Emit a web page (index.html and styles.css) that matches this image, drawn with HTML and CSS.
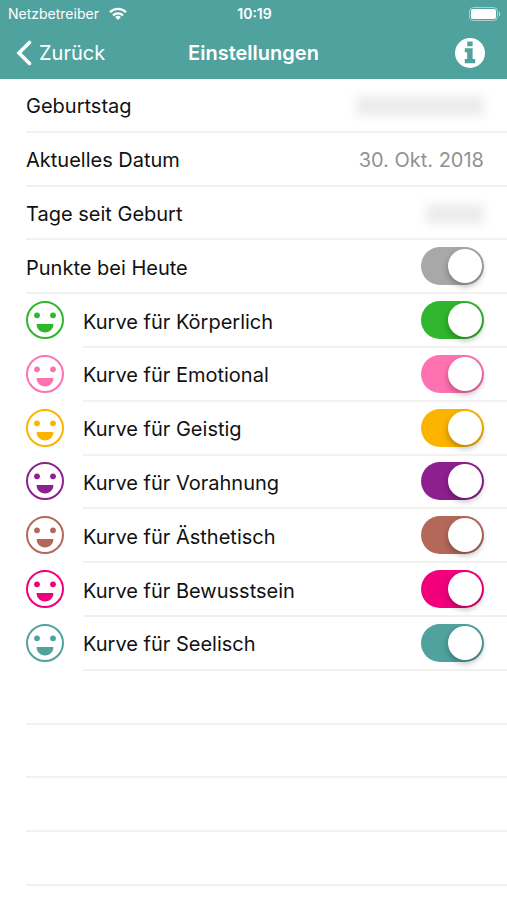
FILE: index.html
```
<!DOCTYPE html>
<html lang="de">
<head>
    <meta charset="UTF-8">
    <meta name="viewport" content="width=device-width, initial-scale=1.0">
    <title>Einstellungen</title>
    <link rel="stylesheet" href="styles.css">
</head>
<body>
    <svg width="0" height="0" class="sprite" aria-hidden="true">
        <symbol id="smiley" viewBox="1 1 38 38">
            <circle cx="20" cy="20" r="18" fill="none" stroke="currentColor" stroke-width="2"/>
            <circle cx="12" cy="15.3" r="2.9" fill="currentColor"/>
            <circle cx="28" cy="15.3" r="2.9" fill="currentColor"/>
            <path d="M11.6 24h16.8c0 5-3.4 8.4-8.4 8.4s-8.4-3.4-8.4-8.4z" fill="currentColor"/>
        </symbol>
    </svg>

    <header>
        <div class="status">
            <span class="carrier">Netzbetreiber
                <svg width="18" height="14" viewBox="0 0 18 14" fill="none" stroke="#fff" stroke-width="2.2">
                    <path d="M1 5.2a11.4 11.4 0 0 1 16 0"/>
                    <path d="M4 8.4a7.2 7.2 0 0 1 10 0"/>
                    <path d="M9 13l-2.9-2.9a4.1 4.1 0 0 1 5.8 0z" fill="#fff" stroke="none"/>
                </svg>
            </span>
            <span class="time">10:19</span>
            <svg class="battery" width="32" height="14" viewBox="0 0 32 14">
                <rect x="0.5" y="0.5" width="28" height="13" rx="4" fill="none" stroke="#fff" stroke-opacity="0.5"/>
                <rect x="2" y="2" width="25" height="10" rx="2" fill="#fff"/>
                <path d="M30 4.5c1.6.7 1.6 4.3 0 5z" fill="#fff" fill-opacity="0.6"/>
            </svg>
        </div>
        <nav>
            <a href="#" class="back">
                <svg width="16" height="26" viewBox="0 0 16 26" fill="none" stroke="#fff" stroke-width="3.6" stroke-linecap="round">
                    <path d="M13.5 2.5L3 13l10.5 10.5"/>
                </svg>
                Zurück
            </a>
            <h1>Einstellungen</h1>
            <button type="button" class="info" aria-label="Info">
                <svg width="30" height="30" viewBox="0 0 30 30">
                    <circle cx="15" cy="15" r="15" fill="#fff"/>
                    <path d="M12.2 3.6h5.4v4.6h-5.4zM9.8 10.2h7.8v10.9h2.6v4.1H9.8v-4.1h2.4v-6.8H9.8z" fill="#50a29e"/>
                </svg>
            </button>
        </nav>
    </header>

    <main>
        <div class="row">
            <div class="cell">
                <span class="text">Geburtstag</span>
                <span class="hidden-value"></span>
            </div>
        </div>
        <div class="row">
            <div class="cell">
                <span class="text">Aktuelles Datum</span>
                <span class="text value">30. Okt. 2018</span>
            </div>
        </div>
        <div class="row">
            <div class="cell">
                <span class="text">Tage seit Geburt</span>
                <span class="hidden-value short"></span>
            </div>
        </div>
        <div class="row gray">
            <div class="cell">
                <label class="text" for="heute">Punkte bei Heute</label>
                <input type="checkbox" id="heute" checked>
            </div>
        </div>
        <div class="row green">
            <svg class="smiley"><use href="#smiley"/></svg>
            <div class="cell">
                <label class="text" for="koerperlich">Kurve für Körperlich</label>
                <input type="checkbox" id="koerperlich" checked>
            </div>
        </div>
        <div class="row pink">
            <svg class="smiley"><use href="#smiley"/></svg>
            <div class="cell">
                <label class="text" for="emotional">Kurve für Emotional</label>
                <input type="checkbox" id="emotional" checked>
            </div>
        </div>
        <div class="row yellow">
            <svg class="smiley"><use href="#smiley"/></svg>
            <div class="cell">
                <label class="text" for="geistig">Kurve für Geistig</label>
                <input type="checkbox" id="geistig" checked>
            </div>
        </div>
        <div class="row purple">
            <svg class="smiley"><use href="#smiley"/></svg>
            <div class="cell">
                <label class="text" for="vorahnung">Kurve für Vorahnung</label>
                <input type="checkbox" id="vorahnung" checked>
            </div>
        </div>
        <div class="row brown">
            <svg class="smiley"><use href="#smiley"/></svg>
            <div class="cell">
                <label class="text" for="aesthetisch">Kurve für Ästhetisch</label>
                <input type="checkbox" id="aesthetisch" checked>
            </div>
        </div>
        <div class="row magenta">
            <svg class="smiley"><use href="#smiley"/></svg>
            <div class="cell">
                <label class="text" for="bewusstsein">Kurve für Bewusstsein</label>
                <input type="checkbox" id="bewusstsein" checked>
            </div>
        </div>
        <div class="row teal">
            <svg class="smiley"><use href="#smiley"/></svg>
            <div class="cell">
                <label class="text" for="seelisch">Kurve für Seelisch</label>
                <input type="checkbox" id="seelisch" checked>
            </div>
        </div>
        <div class="row"><div class="cell"></div></div>
        <div class="row"><div class="cell"></div></div>
        <div class="row"><div class="cell"></div></div>
        <div class="row"><div class="cell"></div></div>
    </main>
</body>
</html>
```
FILE: styles.css
```
* {
    box-sizing: border-box;
}

body {
    margin: 0;
    min-height: 100vh;
    display: flex;
    flex-direction: column;
    background-color: #fff;
    font-family: Inter, "Liberation Sans", sans-serif;
    font-size: 20px;
}

.sprite {
    position: absolute;
}

/* Header */
header {
    background-color: #50a29e;
    color: #fff;
}

.status,
nav {
    display: grid;
    grid-template-columns: 1fr auto 1fr;
    align-items: center;
}

.status {
    height: 27px;
    padding: 0 6px 0 8px;
    font-size: 14px;
}

.carrier {
    display: flex;
    align-items: center;
    gap: 10px;
}

.time {
    font-weight: 600;
}

.battery {
    justify-self: end;
}

nav {
    height: 52px;
    padding: 0 16px;
}

.back {
    display: flex;
    align-items: center;
    gap: 7px;
    color: #fff;
    text-decoration: none;
}

h1 {
    margin: 0;
    font-size: 20px;
    font-weight: 600;
}

.info {
    justify-self: end;
    display: flex;
    margin-right: 6px;
    padding: 0;
    border: none;
    background: none;
    cursor: pointer;
}

/* Liste */
main {
    flex: 1;
    display: grid;
    grid-auto-rows: minmax(48px, 1fr);
    padding: 0 0 14px 26px;
}

.row {
    display: flex;
    align-items: center;
}

/* Die Linie gehört zur Zelle, so beginnt sie erst nach dem Smiley */
.cell {
    flex: 1;
    align-self: stretch;
    display: flex;
    align-items: center;
    justify-content: space-between;
    padding-right: 23px;
    border-bottom: 2px solid #f1f1f1;
}

.text {
    padding-top: 3px;
    color: #111;
}

.value {
    color: #929292;
}

.hidden-value {
    width: 128px;
    height: 20px;
    margin-top: 3px;
    background-color: #ececec;
    filter: blur(5px);
}

.hidden-value.short {
    width: 58px;
}

.smiley {
    width: 38px;
    height: 38px;
    margin: 0 19px 2px 0;
    flex: none;
}

/* Schalter */
input[type="checkbox"] {
    appearance: none;
    width: 63px;
    height: 38px;
    margin: 0;
    padding: 2px;
    display: flex;
    flex: none;
    border-radius: 19px;
    background-color: currentColor;
    color: inherit;
    cursor: pointer;
}

input[type="checkbox"]::before {
    content: "";
    width: 34px;
    height: 34px;
    border-radius: 50%;
    background-color: #fff;
    box-shadow: 0 3px 6px rgba(0, 0, 0, 0.3);
}

input[type="checkbox"]:checked {
    justify-content: flex-end;
}

.gray { color: #a8a8a8; }
.green { color: #2fb62c; }
.pink { color: #ff72b0; }
.yellow { color: #fcb400; }
.purple { color: #8e1f8e; }
.brown { color: #b4685a; }
.magenta { color: #f2007c; }
.teal { color: #50a29e; }
```
